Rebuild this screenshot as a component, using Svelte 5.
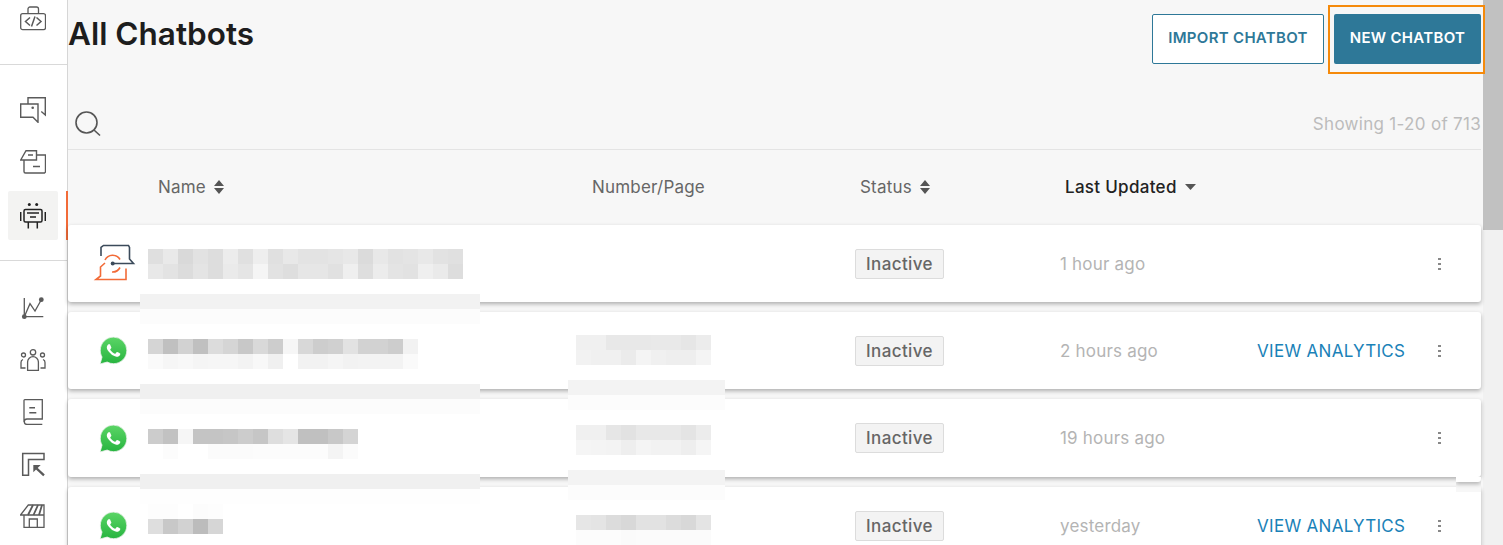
<script>
  const rows = [
    {
      type: 'bot', updated: '1 hour ago', analytics: false, cls: 'r1', nameTop: 24, numTop: 0,
      name: [
        ['df','e9','d9','e2','dd','ec','e0','ee','e0','e8','e3','e3','e5','e8','db','e8','e2','e4','e8','e2','e0'],
        ['e8','e3','dc','e4','dd','ea','e5','f5','e2','de','e6','e6','e1','ef','de','ec','e4','e2','ef','ea','dd']
      ],
      num: null
    },
    {
      type: 'wa', updated: '2 hours ago', analytics: true, cls: 'r2', nameTop: 27, numTop: 23,
      name: [
        ['d5','c0','d2','c0','dc','d5','c8','d9','cd','f6','d8','cd','d0','e2','d2','d2','cd','f2'],
        ['fa','f6','f8','f5','f6','f6','f3','f8','f0','ff','f2','f2','f5','f2','f3','f3','f3','fa']
      ],
      num: [
        ['f0','f0','e8','e8','e8','e9','e9','e6','ec'],
        ['f2','f0','f0','eb','f4','f0','ee','ee','f4']
      ]
    },
    {
      type: 'wa', updated: '19 hours ago', analytics: false, cls: 'r3', nameTop: 30, numTop: 26,
      name: [
        ['cc','c2','f6','c4','c4','c6','cc','c6','de','e5','c0','c0','c8','d4'],
        ['ff','fc','ff','ff','fb','fb','fb','fc','fc','fc','fc','fc','f4','fb']
      ],
      num: [
        ['f0','f0','e6','e2','e8','e8','e8','e4','ec'],
        ['f5','f4','f3','ee','f4','f2','f2','ee','f5']
      ]
    },
    {
      type: 'wa', updated: 'yesterday', analytics: true, cls: 'r4', nameTop: 17, numTop: 28,
      name: [
        ['fd','fd','ff','fc','fd'],
        ['de','c8','d2','bc','d6']
      ],
      num: [
        ['e6','e4','dc','d8','e2','e2','dc','d8','e4'],
        ['fc','fc','fc','fa','fb','fb','fb','fb','fb']
      ]
    }
  ];

  // smears left over from the redaction, they sit across the row gaps
  const smears = [
    { cls: 's1', colors: ['f2', 'fc'] },
    { cls: 's2', colors: ['f0', 'fc'] },
    { cls: 's3', colors: ['f0', 'fe'] },
    { cls: 's4', colors: ['f3', 'fc'] },
    { cls: 's5', colors: ['f3', 'fc'] }
  ];
</script>

{#snippet mosaic(cells, top)}
  <div class="mosaic" style="margin-top:{top}px">
    {#each cells as line}
      <div class="mosaic-line">
        {#each line as c}
          <span style="background:#{c}{c}{c}"></span>
        {/each}
      </div>
    {/each}
  </div>
{/snippet}

{#snippet sortIcon()}
  <svg class="sort" width="10" height="14" viewBox="0 0 10 14"><path d="M5 0 L10 6 H0Z M5 14 L0 8 H10Z" fill="#555"/></svg>
{/snippet}

{#snippet whatsapp()}
  <svg width="29" height="29" viewBox="-1 -1 26 26">
    <defs>
      <linearGradient id="wa" x1="0" y1="0" x2="0" y2="1">
        <stop offset="0" stop-color="#5bd566"/>
        <stop offset="1" stop-color="#27b43f"/>
      </linearGradient>
    </defs>
    <path d="M20.464 3.488A11.815 11.815 0 0 0 12.05 0C5.495 0 .16 5.335.157 11.892c0 2.096.547 4.142 1.588 5.945L.057 24l6.305-1.654a11.882 11.882 0 0 0 5.683 1.448h.005c6.554 0 11.890-5.335 11.893-11.893a11.821 11.821 0 0 0-3.480-8.413z" fill="url(#wa)" stroke="#f1f1f1" stroke-width=".7"/>
    <path d="M17.472 14.382c-.297-.149-1.758-.867-2.03-.967-.273-.099-.471-.148-.67.15-.197.297-.767.966-.94 1.164-.173.199-.347.223-.644.075-.297-.15-1.255-.463-2.39-1.475-.883-.788-1.48-1.761-1.653-2.059-.173-.297-.018-.458.13-.606.134-.133.298-.347.446-.52.149-.174.198-.298.298-.497.099-.198.05-.371-.025-.52-.075-.149-.669-1.612-.916-2.207-.242-.579-.487-.5-.669-.51-.173-.008-.371-.01-.57-.01-.198 0-.52.074-.792.372-.272.297-1.04 1.016-1.04 2.479 0 1.462 1.065 2.875 1.213 3.074.149.198 2.096 3.2 5.077 4.487.709.306 1.262.489 1.694.625.712.227 1.36.195 1.871.118.571-.085 1.758-.719 2.006-1.413.248-.694.248-1.289.173-1.413-.074-.124-.272-.198-.57-.347" fill="#fff"/>
  </svg>
{/snippet}

<div class="page">
  <nav class="sidebar">
    <div class="nav-group top">
      <svg class="nav-icon" viewBox="0 0 26 26" fill="none" stroke="#5a5a5a" stroke-width="1.300">
        <rect x=".7" y="8.700" width="24.800" height="16" rx="2"/>
        <path d="M8 8.700V4a2 2 0 0 1 2-2h6.500a2 2 0 0 1 2 2v4.700"/>
        <path d="M10 12.500 5.500 16.500l4.500 4M16.500 12.500l4.500 4-4.500 4M15 11.500l-3.500 10" stroke-width="1.500"/>
      </svg>
    </div>
    <div class="nav-group">
      <div class="nav-item">
        <svg class="nav-icon" viewBox="0 0 26 26" fill="none" stroke="#5a5a5a" stroke-width="1.400">
          <path d="M8 7V.7H25.300V18l-4-3.500"/>
          <path d="M.7 7H18V25.300l-5-5H.7z"/>
          <circle cx="12.700" cy="10.700" r="1.300" fill="#5a5a5a" stroke="none"/>
        </svg>
      </div>
      <div class="nav-item">
        <svg class="nav-icon" viewBox="0 0 26 26" fill="none" stroke="#5a5a5a" stroke-width="1.400">
          <path d="M4 11V22.500a1.500 1.500 0 0 0 1.500 1.500H24.500a1.500 1.500 0 0 0 1-1.500V6H16.500"/>
          <path d="M.7 11 6 1.700H16.500V11z"/>
          <path d="M8 6h5M13 17.500h7"/>
        </svg>
      </div>
      <div class="nav-item active">
        <svg class="nav-icon" viewBox="0 0 26 26" fill="none" stroke="#222" stroke-width="1.500">
          <circle cx="9.300" cy="1.500" r="1.500" fill="#222" stroke="none"/>
          <circle cx="16.700" cy="1.500" r="1.500" fill="#222" stroke="none"/>
          <rect x="4" y="6.500" width="18" height="12.500" rx="1.500"/>
          <path d="M.7 9v9M25.300 9v9M8.300 19v6.500M17.300 19v6.500M7 10h12M10 14h6"/>
        </svg>
      </div>
    </div>
    <div class="nav-group">
      <div class="nav-item">
        <svg class="nav-icon" viewBox="0 0 26 26" fill="none" stroke="#5a5a5a" stroke-width="1.300">
          <path d="M4.300 3V21.700M4.300 21.700H23.300"/>
          <path d="M4.300 21.700 10 8.700l5 7.300 6.300-11.300"/>
          <circle cx="4.300" cy="21.700" r="2.400" fill="#5a5a5a" stroke="none"/>
          <circle cx="21.300" cy="4.700" r="2.400" fill="#5a5a5a" stroke="none"/>
        </svg>
      </div>
      <div class="nav-item">
        <svg class="nav-icon" viewBox="0 0 26 26" fill="none" stroke="#5a5a5a" stroke-width="1.300">
          <circle cx="13" cy="5.300" r="2.700"/>
          <path d="M7.600 23.300V15a5.400 5.400 0 0 1 10.800 0v8.300z"/>
          <circle cx="3.500" cy="8" r="2"/>
          <circle cx="22.500" cy="8" r="2"/>
          <path d="M5.500 21H1V15.500a3 3 0 0 1 2-3M20.500 21H25V15.500a3 3 0 0 0-2-3"/>
        </svg>
      </div>
      <div class="nav-item">
        <svg class="nav-icon" viewBox="0 0 26 26" fill="none" stroke="#5a5a5a" stroke-width="1.300">
          <path d="M4 23V1.500a.8.8 0 0 1 .8-.8H22.300V20H7a2.700 2.700 0 0 0 0 5.400h15.300"/>
          <path d="M9.300 8.700h5.700M9.300 13.700h7" stroke-width="1.500"/>
        </svg>
      </div>
      <div class="nav-item">
        <svg class="nav-icon" viewBox="0 0 26 26" fill="none" stroke="#5a5a5a" stroke-width="1.500">
          <path d="M2.700 24.300V2.500H24V8.500H8.500V24.300z"/>
          <path d="M13.300 14h7.400l-7.400 7.300z" fill="#5a5a5a" stroke="none"/>
          <path d="M16.500 17.300 24 24.300" stroke-width="2.300"/>
        </svg>
      </div>
      <div class="nav-item">
        <svg class="nav-icon" viewBox="0 0 26 26" fill="none" stroke="#5a5a5a" stroke-width="1.300">
          <path d="M4 12.500V24.300H24V2H8.300L.5 12H24"/>
          <path d="M9.300 24.300V16h8v8.300"/>
          <path d="M8 12 13 2M13.500 12 18 2M19 12 22 2" stroke-width="1.800"/>
        </svg>
      </div>
    </div>
  </nav>

  <main class="content">
    <header class="top-bar">
      <h1>All Chatbots</h1>
      <div class="actions">
        <button class="btn outline">IMPORT CHATBOT</button>
        <div class="focus-ring"><button class="btn solid">NEW CHATBOT</button></div>
      </div>
    </header>

    <div class="search-bar">
      <svg width="28" height="28" viewBox="0 0 28 28" fill="none" stroke="#555" stroke-width="1.600">
        <circle cx="12.500" cy="12.500" r="10.500"/>
        <path d="M20 20l6 5.500"/>
      </svg>
      <span class="count">Showing 1-20 of 713</span>
    </div>

    <div class="table-head">
      <span class="th name-col">Name {@render sortIcon()}</span>
      <span class="th num-col">Number/Page</span>
      <span class="th status-col">Status {@render sortIcon()}</span>
      <span class="th updated-col strong">Last Updated <svg width="11" height="6" viewBox="0 0 11 6"><path d="M0 0H11L5.500 6Z" fill="#555"/></svg></span>
    </div>

    <div class="list">
      {#each rows as row}
        <div class="row {row.cls}">
          <div class="icon-col">
            {#if row.type === 'bot'}
              <svg class="bot" width="50" height="50" viewBox="0 0 50 50" fill="none" stroke-width="1.600">
                <path d="M11 17V8.500l2.500-2h25l1 2V20l4 4.500H23" stroke="#3b4a5a"/>
                <circle cx="22.700" cy="24.500" r="2" fill="#3b4a5a"/>
                <path d="M15 21a8.500 8.500 0 0 1 15-.5M30 28.500a8.500 8.500 0 0 1-8 4.500" stroke="#f26b38"/>
                <path d="M15 24 10.500 28V37L6 40.500H36V29.500" stroke="#f26b38"/>
              </svg>
            {:else}
              {@render whatsapp()}
            {/if}
          </div>
          <div class="name-cell">{@render mosaic(row.name, row.nameTop)}</div>
          <div class="num-cell">
            {#if row.num}{@render mosaic(row.num, row.numTop)}{/if}
          </div>
          <div class="status-cell"><span class="badge">Inactive</span></div>
          <div class="updated-cell">{row.updated}</div>
          <div class="link-cell">
            {#if row.analytics}<a href="#top" class="link">VIEW ANALYTICS</a>{/if}
          </div>
          <div class="more">
            <i></i><i></i><i></i>
          </div>
        </div>
      {/each}
      {#each smears as s}
        <div class="smear {s.cls}">
          <span style="background:#{s.colors[0]}{s.colors[0]}{s.colors[0]}"></span>
          <span style="background:#{s.colors[1]}{s.colors[1]}{s.colors[1]}"></span>
        </div>
      {/each}
      <div class="seam"><div></div></div>
    </div>
  </main>

  <div class="scrollbar"><div class="thumb"></div></div>
</div>

<style>
  :global(body) {
    margin: 0;
    overflow: hidden;
    font-family: Inter, 'Liberation Sans', sans-serif;
  }

  .page {
    display: flex;
    width: 1503px;
    height: 545px;
    overflow: hidden;
    background: #f7f7f7;
  }

  .sidebar {
    width: 67px;
    flex-shrink: 0;
    background: #fff;
    border-right: 1px solid #d6d6d6;
  }

  .nav-group {
    padding-top: 19px;
    height: 196px;
    box-sizing: border-box;
    border-bottom: 1px solid #d9d9d9;
  }

  .nav-group:last-child {
    border-bottom: none;
    padding-top: 21px;
    height: auto;
  }

  .nav-group.top {
    height: 65px;
    padding: 5px 0 0 20px;
  }

  .nav-icon {
    width: 26px;
    height: 26px;
    display: block;
  }

  .nav-item {
    position: relative;
    display: flex;
    align-items: center;
    justify-content: center;
    height: 52px;
    width: 50px;
    margin-left: 8px;
  }

  .nav-item.active {
    background: #f3f3f2;
    border-radius: 2px;
    height: 49px;
    margin-top: 3px;
  }

  .nav-item.active::after {
    content: '';
    position: absolute;
    right: -10px;
    top: 0;
    bottom: 0;
    width: 2px;
    background: #f26b38;
  }

  .content {
    width: 1413px;
    flex-shrink: 0;
    color: #222;
  }

  .top-bar {
    display: flex;
    justify-content: space-between;
    height: 99px;
  }

  h1 {
    margin: 15px 0 0;
    font-size: 31.5px;
    line-height: 38px;
    font-weight: 600;
    color: #1d1d1d;
  }

  .actions {
    display: flex;
    align-items: flex-start;
    margin-right: -4px;
    gap: 4px;
    position: relative;
    z-index: 1;
  }

  .btn {
    height: 50px;
    border-radius: 2px;
    font-family: inherit;
    font-size: 15px;
    letter-spacing: 0.3px;
    font-weight: 600;
    box-sizing: border-box;
    padding: 0 0 3px;
    margin-top: 14px;
  }

  .outline {
    width: 172px;
    background: #fff;
    border: 1px solid #2e7898;
    color: #2e7898;
  }

  .solid {
    width: 147px;
    background: #2e7898;
    border: none;
    color: #fff;
    margin: 0;
    display: block;
  }

  .focus-ring {
    margin-top: 5px;
    padding: 7px 2px 8px 4px;
    border: 2px solid #f58a0b;
  }

  .search-bar {
    display: flex;
    justify-content: space-between;
    align-items: center;
    height: 50px;
    padding: 0 0 0 6px;
    border-bottom: 1px solid #e4e4e4;
  }

  .count {
    color: #bcbcbc;
    font-size: 17px;
    letter-spacing: 0.3px;
  }

  .table-head {
    display: flex;
    align-items: center;
    height: 73px;
    padding-bottom: 2px;
    font-size: 17px;
    color: #666;
  }

  .th {
    display: flex;
    align-items: center;
    gap: 8px;
    letter-spacing: 0.2px;
  }

  .name-col { margin-left: 90px; width: 434px; }
  .num-col { width: 268px; }
  .status-col { width: 205px; }
  .updated-col { width: 200px; }

  .strong {
    color: #222;
    font-weight: 500;
    letter-spacing: 0.3px;
  }

  .list {
    position: relative;
  }

  .row {
    display: flex;
    align-items: center;
    background: #fff;
    border-radius: 3px;
    box-shadow: 0 2px 4px rgba(0, 0, 0, 0.3);
    margin-bottom: 10px;
    height: 77px;
  }

  .r3 {
    height: 78px;
  }

  .icon-col {
    width: 80px;
    display: flex;
    justify-content: center;
    padding-left: 10px;
    box-sizing: border-box;
    flex-shrink: 0;
  }

  .bot {
    margin-left: 2px;
    margin-right: -2px;
    flex-shrink: 0;
  }

  .name-cell,
  .num-cell {
    align-self: flex-start;
    flex-shrink: 0;
  }

  .name-cell { width: 428px; }
  .num-cell { width: 279px; }
  .status-cell { width: 205px; flex-shrink: 0; }

  .mosaic-line {
    display: flex;
  }

  .mosaic-line span {
    width: 15px;
    height: 15px;
  }

  .badge {
    display: block;
    width: 89px;
    height: 30px;
    line-height: 28px;
    box-sizing: border-box;
    text-align: center;
    border: 1px solid #dcdcdc;
    border-radius: 2px;
    background: #f3f3f3;
    color: #666;
    font-size: 17px;
    font-weight: 500;
    letter-spacing: 0.4px;
  }

  .updated-cell {
    width: 197px;
    flex-shrink: 0;
    color: #b4b4b4;
    font-size: 17px;
    letter-spacing: 0.2px;
  }

  .link-cell {
    width: 180px;
    flex-shrink: 0;
  }

  .link {
    color: #1a82b8;
    font-size: 17px;
    letter-spacing: 0.3px;
    text-decoration: none;
  }

  .more {
    display: flex;
    flex-direction: column;
    gap: 3px;
    align-items: center;
    width: 4px;
  }

  .more i {
    width: 3px;
    height: 2px;
    background: #888;
  }

  .smear {
    position: absolute;
    width: 340px;
    left: 72px;
    display: flex;
    flex-direction: column;
  }

  .smear span {
    height: 15px;
  }

  .s1 { top: 69px; }
  .s2 { top: 159px; }
  .s3 { top: 249px; }
  .s4 { top: 155px; left: 500px; width: 157px; }
  .s5 { top: 245px; left: 500px; width: 157px; }

  /* screenshot was stitched here, the right end of row 3 runs 5px longer */
  .seam {
    position: absolute;
    left: 1388px;
    top: 252px;
    width: 25px;
    height: 15px;
    overflow: hidden;
    background: #f7f7f7;
  }

  .seam div {
    height: 5px;
    background: #fff;
    border-radius: 0 0 3px 0;
    box-shadow: 0 2px 4px rgba(0, 0, 0, 0.3);
  }

  .scrollbar {
    margin-left: 2px;
    width: 20px;
    height: 545px;
    background: #f1f1f1;
  }

  .thumb {
    height: 230px;
    background: #c1c1c1;
  }
</style>
